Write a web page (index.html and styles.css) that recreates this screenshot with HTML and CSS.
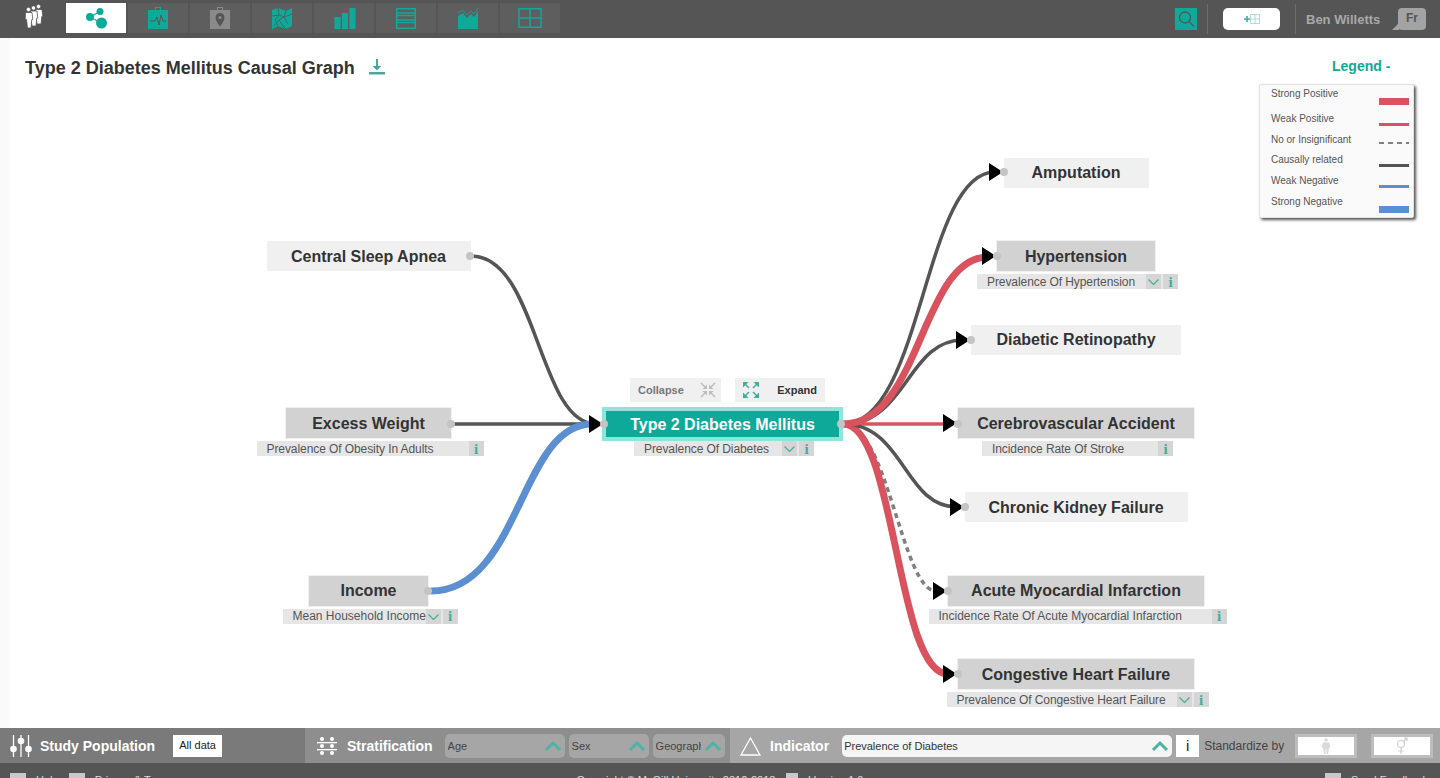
FILE: index.html
```html
<!DOCTYPE html>
<html>
<head>
  <title>Type 2 Diabetes Mellitus Causal Graph</title>
  <link rel="stylesheet" href="styles.css">
</head>
<body>
  <svg class="icon-defs" width="0" height="0">
    <defs>
      <symbol id="chev-small" viewBox="0 0 15 15">
        <polyline points="2.5,5.5 7.5,10.5 12.5,5.5" fill="none" stroke="#3fae9f" stroke-width="1.2"/>
      </symbol>
      <symbol id="chev-up" viewBox="0 0 18 12">
        <polyline points="2,10 9,3 16,10" fill="none" stroke="#4db3a5" stroke-width="3"/>
      </symbol>
      <polygon id="arrow" points="-14,-9 0,0 -14,9" fill="#000"/>
    </defs>
  </svg>

  <!-- Top navigation -->
  <header class="topbar">
    <div class="logo">
      <svg width="18" height="24" viewBox="0 0 18 24" fill="#fff" stroke="#555" stroke-width=".8">
        <circle cx="13.500" cy="2.500" r="2.200"/>
        <path d="M10.500 5.500h6.500l.8 7h-1L16 20h-4l-1-7.500z"/>
        <circle cx="8.500" cy="4" r="2.200"/>
        <path d="M5.500 7h6.500l.8 7h-1L11 22H7l-1-8z"/>
        <circle cx="3.500" cy="5.500" r="2.200"/>
        <path d="M.5 8.500h6.500l.8 7h-1L6 24H2.500L1.500 15.500H.2z"/>
      </svg>
    </div>
    <nav class="tabs">
      <a class="tab tab-active">
        <svg width="24" height="24" viewBox="0 0 24 24" fill="#0fa99a">
          <path d="M6 11L16 5.500M6 11l11.500 6" stroke="#0fa99a" stroke-width="1.200"/>
          <circle cx="6" cy="11" r="4"/><circle cx="16" cy="5.500" r="3.500"/><circle cx="17.500" cy="17" r="5.500"/>
        </svg>
      </a>
      <a class="tab">
        <svg width="24" height="24" viewBox="0 0 24 24">
          <rect x="2" y="4" width="20" height="19" fill="#0fa99a"/>
          <rect x="9.500" y="1.500" width="5" height="3.500" fill="none" stroke="#0fa99a"/>
          <polyline points="4,15 9,15 11,11 13,19 15,9 17,15 20,15" fill="none" stroke="#555" stroke-width="1"/>
        </svg>
      </a>
      <a class="tab">
        <svg width="24" height="24" viewBox="0 0 24 24">
          <rect x="2" y="4" width="20" height="19" fill="#8a8a8a"/>
          <rect x="9.500" y="1.500" width="5" height="3.500" fill="none" stroke="#8a8a8a"/>
          <path d="M12 7a4.500 4.500 0 0 0-4.500 4.500C7.500 15 12 20.500 12 20.500s4.500-5.500 4.500-9A4.500 4.500 0 0 0 12 7z" fill="#555"/>
          <circle cx="12" cy="11.500" r="1.600" fill="#8a8a8a"/>
        </svg>
      </a>
      <a class="tab">
        <svg width="24" height="24" viewBox="0 0 24 24">
          <polygon points="2,4 8,2 16,5 22,2 22,20 16,23 8,20 2,23" fill="#0fa99a"/>
          <path d="M8 2l1 7-4 5 3 6M16 5l-2 6-5 3 4 6 3 3M2 10l7-1 5 2 8-3M9 14l-5 6M14 11l4 7" fill="none" stroke="#555" stroke-width=".8"/>
        </svg>
      </a>
      <a class="tab">
        <svg width="24" height="24" viewBox="0 0 24 24" fill="#0fa99a">
          <rect x="2.500" y="11" width="6" height="12"/><rect x="10" y="7" width="6" height="16"/><rect x="17.500" y="2" width="6" height="21"/>
        </svg>
      </a>
      <a class="tab">
        <svg width="24" height="24" viewBox="0 0 24 24" fill="none" stroke="#0fa99a" stroke-width="1.500">
          <rect x="2.750" y="2.750" width="18.500" height="19.500"/>
          <path d="M3 7h18M3 9.500h18M3 14h18M3 16.500h18" />
        </svg>
      </a>
      <a class="tab">
        <svg width="24" height="24" viewBox="0 0 24 24">
          <polygon points="2,10 7,7 11,12 15,8 18,11 22,5 22,23 2,23" fill="#0fa99a"/>
          <polyline points="2,7 7,4 11,9 15,5 18,8 22,2" fill="none" stroke="#0fa99a" stroke-width=".8"/>
        </svg>
      </a>
      <a class="tab">
        <svg width="24" height="24" viewBox="0 0 24 24" fill="none" stroke="#0fa99a" stroke-width="1.500">
          <rect x="1" y="2.750" width="22" height="18.500"/>
          <path d="M12 3v18M1 12h22"/>
        </svg>
      </a>
    </nav>
    <div class="user-area">
      <span class="search-box">
        <svg width="22" height="22" viewBox="0 0 22 22" fill="none" stroke="#555" stroke-width="1.300">
          <circle cx="10" cy="9.500" r="5.500"/><path d="M14 13.500l5 5"/>
        </svg>
      </span>
      <span class="divider"></span>
      <span class="add-btn">
        <svg width="16" height="10" viewBox="0 0 16 10">
          <path d="M0 5h6M3 2v6" stroke="#3fae9f" stroke-width="1.600"/>
          <path d="M6.500 .5h9v9h-9zM6.500 5h9M11 .5v9" fill="none" stroke="#9bd5cd" stroke-width=".8"/>
        </svg>
      </span>
      <span class="divider"></span>
      <span class="user-name">Ben Willetts</span>
      <span class="lang-bubble">Fr</span>
    </div>
  </header>

  <!-- Graph canvas -->
  <main class="canvas">
    <div class="page-title">
      <h1>Type 2 Diabetes Mellitus Causal Graph</h1>
      <svg width="16" height="16" viewBox="0 0 16 16" fill="#4aa99c">
        <path d="M7 0h2v7h3.500L8 11.500 3.500 7H7z"/><rect x="0" y="13" width="16" height="2.500"/>
      </svg>
    </div>

    <div class="legend-toggle">Legend -</div>
    <div class="legend">
      <div class="legend-row legend-row-tall"><span>Strong Positive</span><i class="swatch swatch-thick swatch-red"></i></div>
      <div class="legend-row"><span>Weak Positive</span><i class="swatch swatch-thin swatch-red"></i></div>
      <div class="legend-row legend-row-short"><span>No or Insignificant</span><i class="swatch swatch-dashed"></i></div>
      <div class="legend-row"><span>Causally related</span><i class="swatch swatch-thin swatch-dark"></i></div>
      <div class="legend-row"><span>Weak Negative</span><i class="swatch swatch-thin swatch-blue"></i></div>
      <div class="legend-row"><span>Strong Negative</span><i class="swatch swatch-thick swatch-blue"></i></div>
    </div>

    <!-- Nodes -->
    <div class="node node-left node-apnea">
      <div class="node-title">Central Sleep Apnea</div>
    </div>
    <div class="node node-left node-weight">
      <div class="node-title node-title-data">Excess Weight</div>
      <div class="node-sub">
        <span class="sub-label">Prevalence Of Obesity In Adults</span>
        <span class="sub-info">i</span>
      </div>
    </div>
    <div class="node node-left node-income">
      <div class="node-title node-title-data">Income</div>
      <div class="node-sub">
        <span class="sub-label">Mean Household Income</span>
        <span class="sub-chev"><svg width="15" height="15"><use href="#chev-small"/></svg></span>
        <span class="sub-info">i</span>
      </div>
    </div>

    <div class="node-actions">
      <div class="action action-off">
        <span>Collapse</span>
        <svg width="16" height="16" viewBox="0 0 16 16" fill="#bdbdbd" stroke="#bdbdbd">
          <path d="M7 7V2.500L2.500 7zM9 7V2.500L13.500 7zM7 9v4.500L2.500 9zM9 9v4.500L13.500 9z" stroke="none"/>
          <path d="M1 1l4 4M15 1l-4 4M1 15l4-4M15 15l-4-4" fill="none" stroke-width="1.500"/>
        </svg>
      </div>
      <div class="action action-on">
        <svg width="16" height="16" viewBox="0 0 16 16" fill="#3fae9f" stroke="#3fae9f">
          <path d="M0 0h5.500L0 5.500zM16 0h-5.500L16 5.500zM0 16h5.500L0 10.500zM16 16h-5.500L16 10.500z" stroke="none"/>
          <path d="M2 2l4 4M14 2l-4 4M2 14l4-4M14 14l-4-4" fill="none" stroke-width="1.500"/>
        </svg>
        <span>Expand</span>
      </div>
    </div>
    <div class="node node-center">
      <div class="node-title node-title-main">Type 2 Diabetes Mellitus</div>
      <div class="node-sub">
        <span class="sub-label">Prevalence Of Diabetes</span>
        <span class="sub-chev"><svg width="15" height="15"><use href="#chev-small"/></svg></span>
        <span class="sub-info">i</span>
      </div>
    </div>

    <div class="node node-right node-amputation">
      <div class="node-title">Amputation</div>
    </div>
    <div class="node node-right node-hypertension">
      <div class="node-title node-title-data">Hypertension</div>
      <div class="node-sub">
        <span class="sub-label">Prevalence Of Hypertension</span>
        <span class="sub-chev"><svg width="15" height="15"><use href="#chev-small"/></svg></span>
        <span class="sub-info">i</span>
      </div>
    </div>
    <div class="node node-right node-retinopathy">
      <div class="node-title">Diabetic Retinopathy</div>
    </div>
    <div class="node node-right node-stroke">
      <div class="node-title node-title-data">Cerebrovascular Accident</div>
      <div class="node-sub">
        <span class="sub-label">Incidence Rate Of Stroke</span>
        <span class="sub-info">i</span>
      </div>
    </div>
    <div class="node node-right node-kidney">
      <div class="node-title">Chronic Kidney Failure</div>
    </div>
    <div class="node node-right node-infarction">
      <div class="node-title node-title-data">Acute Myocardial Infarction</div>
      <div class="node-sub">
        <span class="sub-label">Incidence Rate Of Acute Myocardial Infarction</span>
        <span class="sub-info">i</span>
      </div>
    </div>
    <div class="node node-right node-heart">
      <div class="node-title node-title-data">Congestive Heart Failure</div>
      <div class="node-sub">
        <span class="sub-label">Prevalence Of Congestive Heart Failure</span>
        <span class="sub-chev"><svg width="15" height="15"><use href="#chev-small"/></svg></span>
        <span class="sub-info">i</span>
      </div>
    </div>

    <!-- Edges, in page coordinates -->
    <svg class="edges" width="1440" height="690" viewBox="0 38 1440 690" fill="none">
      <path class="edge" d="M471 256C538 256 538 424 596 424"/>
      <path class="edge" d="M451 424H596"/>
      <path class="edge edge-thick edge-blue" d="M431 591C520 591 520 424 592 424"/>

      <path class="edge edge-dash" d="M843 424C888 424 902 591 936 591"/>
      <path class="edge edge-thick edge-red" d="M843 424C896 424 896 674 948 674"/>
      <path class="edge edge-thin-red" d="M843 424H950"/>
      <path class="edge" d="M843 424C904 424 904 507 957 507"/>
      <path class="edge" d="M843 424C923 424 923 172 995 172"/>
      <path class="edge" d="M843 424C907 424 907 340 963 340"/>
      <path class="edge edge-thick edge-red" d="M843 424C921 424 921 257 988 257"/>

      <use href="#arrow" x="603" y="424"/>
      <use href="#arrow" x="1003" y="172"/>
      <use href="#arrow" x="996" y="256"/>
      <use href="#arrow" x="970" y="340"/>
      <use href="#arrow" x="957" y="423"/>
      <use href="#arrow" x="964" y="507"/>
      <use href="#arrow" x="947" y="591"/>
      <use href="#arrow" x="957" y="674"/>

      <g fill="#c4c4c4">
        <circle cx="470" cy="256" r="4"/>
        <circle cx="451" cy="424" r="4"/>
        <circle cx="428" cy="591" r="4"/>
        <circle cx="604" cy="424" r="4"/>
        <circle cx="841" cy="424" r="4"/>
        <circle cx="1004" cy="172" r="4"/>
        <circle cx="997" cy="256" r="4"/>
        <circle cx="971" cy="340" r="4"/>
        <circle cx="958" cy="424" r="4"/>
        <circle cx="965" cy="507" r="4"/>
        <circle cx="948" cy="591" r="4"/>
        <circle cx="958" cy="674" r="4"/>
      </g>
    </svg>
  </main>

  <!-- Bottom filters -->
  <section class="toolbar">
    <div class="tool tool-population">
      <svg width="22" height="24" viewBox="0 0 22 24" fill="#fff">
        <path d="M3.500 1v22M11 1v22M18.500 1v22" stroke="#fff" stroke-width="1.300"/>
        <circle cx="3.500" cy="15" r="3.300"/><circle cx="11" cy="7" r="3.300"/><circle cx="18.500" cy="15" r="3.300"/>
      </svg>
      <span class="tool-label">Study Population</span>
      <span class="all-data">All data</span>
    </div>
    <div class="tool tool-strat">
      <svg width="20" height="20" viewBox="0 0 20 20" fill="#fff">
        <circle cx="5" cy="3" r="2"/><circle cx="15" cy="3" r="2"/>
        <circle cx="5" cy="10" r="2"/><circle cx="15" cy="10" r="2"/>
        <circle cx="5" cy="17" r="2"/><circle cx="15" cy="17" r="2"/>
        <rect y="6" width="20" height="1.300"/><rect y="13" width="20" height="1.300"/>
      </svg>
      <span class="tool-label">Stratification</span>
      <div class="select select-age"><span class="select-text">Age</span><svg width="18" height="12"><use href="#chev-up"/></svg></div>
      <div class="select select-sex"><span class="select-text">Sex</span><svg width="18" height="12"><use href="#chev-up"/></svg></div>
      <div class="select select-geo"><span class="select-text">Geography</span><svg width="18" height="12"><use href="#chev-up"/></svg></div>
    </div>
    <div class="tool tool-indicator">
      <svg width="21" height="20" viewBox="0 0 21 20" fill="none" stroke="#fff" stroke-width="1.300">
        <polygon points="10.500,2 20,19 1,19"/>
      </svg>
      <span class="tool-label">Indicator</span>
      <div class="select select-indicator"><span class="select-text">Prevalence of Diabetes</span><svg width="18" height="12"><use href="#chev-up"/></svg></div>
      <span class="info-box">i</span>
      <span class="standardize">Standardize by</span>
      <span class="std-btn">
        <svg width="12" height="16" viewBox="0 0 12 16" fill="#d9d9d9">
          <circle cx="6" cy="2" r="1.800"/><path d="M3 4.500h6l1.500 5H9L8 16H6.500V11h-1v5H4L3 9.500H1.500z"/>
        </svg>
      </span>
      <span class="std-btn std-btn-last">
        <svg width="14" height="18" viewBox="0 0 14 18" fill="none" stroke="#cfcfcf" stroke-width="1.200">
          <circle cx="6" cy="7" r="3.500"/><path d="M6 10.500V17M3.500 14h5M8.500 4.500L12 1M9 1h3v3"/>
        </svg>
      </span>
    </div>
  </section>

  <footer class="footer">
    <div class="foot-group">
      <i class="foot-box"></i><span>Help</span>
      <i class="foot-box foot-doc"></i><span>Privacy &amp; Terms</span>
    </div>
    <div class="foot-group">
      <span>Copyright © McGill University 2012-2018</span>
      <i class="foot-box foot-small"></i><span>Version 1.0</span>
    </div>
    <div class="foot-group foot-right">
      <i class="foot-box"></i><span>Send Feedback</span>
    </div>
  </footer>
</body>
</html>
```

FILE: styles.css
```css
* {
  box-sizing: border-box;
}

html, body {
  height: 100%;
}

body {
  margin: 0;
  font-family: "Liberation Sans", Arial, sans-serif;
  color: #333;
  background-color: #fff;
  display: flex;
  flex-direction: column;
  overflow: hidden;
}

.icon-defs {
  position: absolute;
}

svg {
  display: block;
  flex-shrink: 0;
}

/* Top navigation */
.topbar {
  height: 38px;
  flex-shrink: 0;
  background-color: #555;
  display: flex;
  align-items: flex-start;
}

.logo {
  width: 66px;
  padding: 4px 0 0 25px;
}

.tabs {
  display: flex;
  gap: 2px;
  padding-top: 3px;
}

.tab {
  width: 60px;
  height: 30px;
  background-color: #5e5e5e;
  display: flex;
  align-items: center;
  justify-content: center;
}

.tab-active {
  background-color: #fff;
}

.user-area {
  margin-left: auto;
  height: 38px;
  display: flex;
  align-items: center;
  padding-right: 14px;
}

.search-box {
  width: 22px;
  height: 22px;
  background-color: #0fa99a;
}

.divider {
  width: 1px;
  height: 30px;
  background-color: #6e6e6e;
}

.search-box + .divider {
  margin: 0 15px 0 10px;
}

.add-btn {
  width: 57px;
  height: 22px;
  background-color: #fff;
  border-radius: 5px;
  display: flex;
  align-items: center;
  justify-content: center;
}

.add-btn + .divider {
  margin: 0 10px 0 15px;
}

.user-name {
  font-size: 13px;
  font-weight: bold;
  color: #a8a8a8;
  width: 92px;
}

.lang-bubble {
  position: relative;
  width: 28px;
  height: 22px;
  background-color: #a3a3a3;
  border-radius: 4px;
  font-size: 12px;
  font-weight: bold;
  color: #555;
  text-align: center;
  line-height: 20px;
}

.lang-bubble::before {
  content: "";
  position: absolute;
  left: -6px;
  bottom: 0;
  border-bottom: 7px solid #a3a3a3;
  border-left: 7px solid transparent;
}

/* Graph canvas */
.canvas {
  position: relative;
  flex: 1;
  padding: 20px 0 0 25px;
  background: linear-gradient(90deg, #fafafa 10px, #fff 10px);
}

.page-title {
  display: flex;
  align-items: flex-start;
  gap: 14px;
}

.page-title h1 {
  margin: 0;
  font-size: 18px;
  line-height: 21px;
  color: #333;
}

.page-title svg {
  margin-top: 1px;
}

.legend-toggle {
  position: absolute;
  left: 1332px;
  top: 20px;
  font-size: 14px;
  font-weight: bold;
  color: #0fa99a;
}

.legend {
  position: absolute;
  left: 1259px;
  top: 46px;
  width: 155px;
  height: 134px;
  padding: 3px 4px 0 11px;
  background-color: #fafafa;
  border: 1px solid #e2e2e2;
  border-radius: 2px;
  box-shadow: 2px 2px 3px #555;
  font-size: 10px;
  line-height: 12px;
  color: #555;
}

.legend-row {
  display: flex;
  justify-content: space-between;
  align-items: flex-start;
  height: 21px;
}

.legend-row-tall {
  height: 25px;
}

.legend-row-short {
  height: 20px;
}

.swatch {
  display: block;
  width: 30px;
  margin-top: 10px;
}

.swatch-thick {
  height: 7px;
}

.swatch-thin {
  height: 3px;
}

.swatch-red {
  background-color: #d9535f;
}

.swatch-dark {
  background-color: #555;
}

.swatch-blue {
  background-color: #5b8fd0;
}

.swatch-dashed {
  height: 2px;
  margin-top: 8px;
  background: repeating-linear-gradient(90deg, #808080 0 5px, transparent 5px 9px);
}

/* Nodes */
.node {
  position: absolute;
  width: 340px;
  display: flex;
  flex-direction: column;
  align-items: center;
}

.node-left {
  left: 198.5px;
}

.node-center {
  left: 552.5px;
  top: 369px;
}

.node-right {
  left: 906px;
}

.node-title {
  height: 30px;
  font-size: 16px;
  font-weight: bold;
  line-height: 32px;
  text-align: center;
  white-space: nowrap;
  background-color: #f0f0f0;
  color: #333;
}

.node-title-data {
  background-color: #d2d2d2;
  outline: 1px solid #f0f0f0;
}

.node-title-main {
  width: 241px;
  height: 34px;
  line-height: 27px;
  background-color: #0fa99a;
  border: 4px solid #8fe5d9;
  color: #fff;
}

.node-sub {
  height: 15px;
  margin: 3px 0 0 3px;
  display: flex;
  background-color: #e6e6e6;
  font-size: 12px;
  letter-spacing: -0.08px;
  line-height: 17px;
  color: #555;
}

.node-center .node-sub {
  width: 180px;
  margin-top: 0;
}

.sub-label {
  flex: 1;
  min-width: 0;
  padding-left: 10px;
  white-space: nowrap;
}

.sub-chev {
  width: 15px;
  height: 15px;
  margin-right: 2px;
  background-color: #d5d5d5;
}

.sub-info {
  width: 15px;
  background-color: #d5d5d5;
  font-family: "Liberation Serif", serif;
  font-size: 15px;
  font-weight: bold;
  text-align: center;
  color: #3fae9f;
}

.node-apnea { top: 203px; }
.node-apnea .node-title { width: 204px; }

.node-weight { top: 370px; }
.node-weight .node-title { width: 165px; }
.node-weight .node-sub { width: 227px; }

.node-income { top: 538px; }
.node-income .node-title { width: 119px; line-height: 30px; }
.node-income .node-sub { width: 175px; line-height: 15px; letter-spacing: 0; }

.node-amputation { top: 120px; }
.node-amputation .node-title { width: 145px; line-height: 30px; }

.node-hypertension { top: 203px; }
.node-hypertension .node-title { width: 158px; }
.node-hypertension .node-sub { width: 201px; }

.node-retinopathy { top: 287px; }
.node-retinopathy .node-title { width: 210px; line-height: 30px; }

.node-stroke { top: 370px; }
.node-stroke .node-title { width: 236px; }
.node-stroke .node-sub { width: 191px; }

.node-kidney { top: 454px; }
.node-kidney .node-title { width: 223px; }

.node-infarction { top: 538px; }
.node-infarction .node-title { width: 256px; line-height: 30px; }
.node-infarction .node-sub { width: 298px; line-height: 15px; letter-spacing: 0; }

.node-heart { top: 621px; }
.node-heart .node-title { width: 236px; }
.node-heart .node-sub { width: 262px; }

.node-actions {
  position: absolute;
  left: 630px;
  top: 340px;
  display: flex;
  gap: 14px;
}

.action {
  height: 24px;
  background-color: #f0f0f0;
  display: flex;
  align-items: center;
  justify-content: space-between;
  font-size: 11px;
  font-weight: bold;
}

.action-off {
  width: 91px;
  padding: 0 5px 0 8px;
  color: #777;
}

.action-on {
  width: 90px;
  padding: 0 8px 0 8px;
  color: #333;
}

.edges {
  position: absolute;
  left: 0;
  top: 0;
  pointer-events: none;
}

.edge {
  stroke: #555;
  stroke-width: 3.5;
}

.edge-thick {
  stroke-width: 7;
}

.edge-blue {
  stroke: #5b8fd0;
}

.edge-red {
  stroke: #d9535f;
}

.edge-thin-red {
  stroke: #d9535f;
  stroke-width: 3.5;
}

.edge-dash {
  stroke: #808080;
  stroke-dasharray: 5 4;
}

/* Bottom filters */
.toolbar {
  height: 35px;
  flex-shrink: 0;
  display: flex;
}

.tool {
  height: 35px;
  display: flex;
  align-items: center;
}

.tool-population {
  width: 305px;
  padding-left: 10px;
  background-color: #7a7a7a;
}

.tool-strat {
  width: 425px;
  padding-left: 12px;
  background-color: #8e8e8e;
}

.tool-indicator {
  flex: 1;
  padding-left: 10px;
  background-color: #a6a6a6;
}

.tool-label {
  font-size: 14px;
  font-weight: bold;
  color: #fff;
  white-space: nowrap;
}

.tool-population .tool-label {
  margin: 0 18px 0 8px;
}

.tool-strat .tool-label {
  margin: 0 12px 0 10px;
}

.tool-indicator .tool-label {
  margin: 0 13px 0 9px;
}

.all-data {
  width: 49px;
  height: 22px;
  background-color: #fff;
  font-size: 11px;
  line-height: 21px;
  text-align: center;
  color: #222;
}

.select {
  height: 24px;
  margin-right: 4px;
  padding: 0 3px;
  background-color: #a6a6a6;
  border-radius: 5px;
  display: flex;
  align-items: center;
  justify-content: space-between;
  font-size: 11px;
  color: #444;
}

.select-text {
  overflow: hidden;
  white-space: nowrap;
}

.select-age {
  width: 120px;
}

.select-sex {
  width: 80px;
}

.select-geo {
  width: 72px;
}

.select-geo .select-text {
  width: 45px;
}

.select-indicator {
  width: 330px;
  height: 22px;
  margin-top: 1px;
  padding-left: 2px;
  background-color: #f5f5f5;
  color: #333;
}

.select-indicator .select-text {
  line-height: 15px;
  padding-top: 1px;
}

.info-box {
  width: 23px;
  height: 22px;
  margin-top: 1px;
  background-color: #fff;
  font-size: 15px;
  line-height: 22px;
  text-align: center;
  color: #222;
}

.standardize {
  width: 91px;
  margin-left: 5px;
  font-size: 12px;
  white-space: nowrap;
  color: #444;
}

.std-btn {
  width: 62px;
  height: 24px;
  border: 3px solid #bdbdbd;
  background-color: #fff;
  display: flex;
  align-items: center;
  justify-content: center;
}

.std-btn-last {
  margin-left: 14px;
}

/* Footer, cut off by the window */
.footer {
  height: 15px;
  flex-shrink: 0;
  overflow: hidden;
  padding: 10px 10px 0;
  background-color: #555;
  display: grid;
  grid-template-columns: 1fr auto 1fr;
  font-size: 11px;
  line-height: 14px;
  color: #ddd;
}

.foot-group {
  display: flex;
  gap: 10px;
}

.foot-right {
  justify-content: flex-end;
  padding-right: 2px;
}

.foot-box {
  display: block;
  width: 16px;
  height: 14px;
  background-color: #c8c8c8;
}

.foot-small {
  width: 12px;
  margin-left: 1px;
}
```
